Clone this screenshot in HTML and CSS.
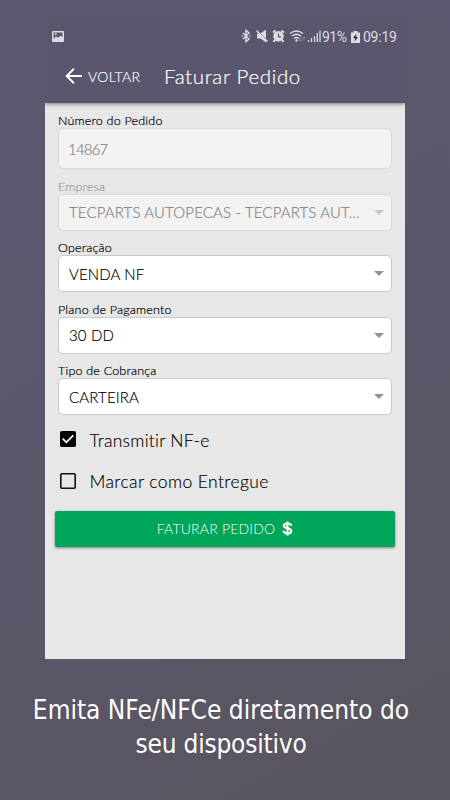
FILE: index.html
```html
<!DOCTYPE html>
<html lang="pt-BR">
<head>
<meta charset="utf-8">
<title>Faturar Pedido</title>
<link rel="stylesheet" href="styles.css">
</head>
<body>
<main class="phone">
  <div class="status">
    <svg class="photo" width="12" height="11" viewBox="0 0 12 11"><rect width="12" height="11" rx="1" fill="#dddce2"/><path d="M1.500 1.500h9v5L8.700 4.500 6.200 6.800 4 5.500 1.500 7.800z" fill="#5a566e"/><circle cx="3.700" cy="3.300" r="1" fill="#dddce2"/></svg>
    <div class="signals">
      <svg class="radios" width="83" height="14" viewBox="0 0 83 14">
        <g fill="none" stroke="#dddce2" stroke-width="1.400"><path d="M2 4l6 6-3 2.700V1.300L8 4 2 10"/><path d="M.6 7h1M8.500 7h1"/></g>
        <path d="M16 4.500h3.500l5.500-4v13l-5.500-4H16z" fill="#dddce2"/><path d="M16.500 1.500l11 11" stroke="#5a566e" stroke-width="1"/><path d="M15.500 1.500l11 11" stroke="#dddce2" stroke-width="1.400"/>
        <circle cx="37.500" cy="7.300" r="5.200" fill="#dddce2"/><path d="M32 3.500L34.500 1.500M43 3.500L40.500 1.500M34 11l-1.500 1.800M41 11l1.500 1.800" stroke="#dddce2" stroke-width="2"/><path d="M37.500 4.500v3.300H40" fill="none" stroke="#5a566e" stroke-width="1.200"/>
        <g fill="none" stroke="#dddce2" stroke-width="1.300"><path d="M49 4.500q6.500-5 13 0M51 7q4.500-3.500 9 0M53 9.500q2.500-2 5 0"/></g><circle cx="55.500" cy="11.500" r="1.200" fill="#dddce2"/><path d="M59.500 8v4M58 10.500l1.500 1.700 1.500-1.700M63 12V8M61.700 9.300L63 7.800l1.300 1.500" fill="none" stroke="#96939f" stroke-width=".8"/>
        <path d="M67.500 11v2M70.500 9v4M73.500 7v6M76.300 4v9M79 1.500v11.500" stroke="#dddce2" stroke-width="1.300"/>
      </svg>
      <span class="pct">91%</span>
      <svg class="battery" width="9" height="12" viewBox="0 0 9 12"><path d="M0 1.500h2.500V0h4v1.500H9V12H0z" fill="#dddce2"/><path d="M5.500 2.500L2 7h2L3.500 10.500 7 6H5z" fill="#302d3b"/></svg>
      <span class="clock">09:19</span>
    </div>
  </div>
  <header class="bar">
    <svg width="18" height="18" viewBox="0 0 18 18"><path d="M17 9H2M9 1.700L1.700 9 9 16.300" fill="none" stroke="#fff" stroke-width="2"/></svg>
    <span class="back">VOLTAR</span>
    <h1 class="title">Faturar Pedido</h1>
  </header>
  <section class="content">
    <div class="field order disabled">
      <div class="label">Número do Pedido</div>
      <div class="box"><span class="v-order">14867</span></div>
    </div>
    <div class="field company disabled">
      <div class="label">Empresa</div>
      <div class="box"><span>TECPARTS AUTOPECAS - TECPARTS AUT...</span><i class="arrow"></i></div>
    </div>
    <div class="field">
      <div class="label">Operação</div>
      <div class="box"><span>VENDA NF</span><i class="arrow"></i></div>
    </div>
    <div class="field">
      <div class="label">Plano de Pagamento</div>
      <div class="box"><span>30 DD</span><i class="arrow"></i></div>
    </div>
    <div class="field">
      <div class="label">Tipo de Cobrança</div>
      <div class="box"><span>CARTEIRA</span><i class="arrow"></i></div>
    </div>
    <div class="checks">
      <div class="check">
        <svg width="16" height="16" viewBox="0 0 16 16"><rect width="16" height="16" rx="1.700" fill="#050505"/><path d="M2.700 7.700l3.600 3.700 7-7" fill="none" stroke="#fff" stroke-width="1.700"/></svg>
        <span class="c-send">Transmitir NF-e</span>
      </div>
      <div class="check">
        <svg width="16" height="16" viewBox="0 0 16 16"><rect x=".8" y=".8" width="14.400" height="14.400" rx="1" fill="none" stroke="#111" stroke-width="1.600"/></svg>
        <span>Marcar como Entregue</span>
      </div>
    </div>
    <div class="submit">
      <span>FATURAR PEDIDO</span>
      <svg width="11" height="15" viewBox="0 0 11 15"><path d="M9.500 4.700C9 2.900 7.500 2.500 5.500 2.500 3.300 2.500 1.800 3.300 1.800 4.800c0 3.500 7.500 1.500 7.500 5.100 0 1.700-1.500 2.600-3.800 2.600S1.700 11.600 1.400 9.700M5.500.5v14" fill="none" stroke="#fff" stroke-width="2.100"/></svg>
    </div>
  </section>
</main>
<footer class="caption"><div>Emita NFe/NFCe diretamento do</div><div class="cap-two">seu dispositivo</div></footer>
</body>
</html>
```
FILE: styles.css
```css
* { box-sizing: border-box; }
body {
  margin: 0;
  width: 450px;
  height: 800px;
  padding-top: 15px;
  overflow: hidden;
  background: linear-gradient(150deg, #5b5771 0%, #5a5669 55%, #59555e 100%);
  font-family: Lato, "Liberation Sans", sans-serif;
  font-weight: 300;
  font-variant-ligatures: none;
  white-space: nowrap;
}
svg { display: block; flex: none; }
.phone { width: 360px; height: 644px; margin: 0 auto; background: #e7e7e7; }
.status {
  display: flex;
  justify-content: space-between;
  height: 34px;
  padding: 14px 8px 0 7px;
  background: #5a566e;
}
.photo { margin-top: 2px; }
.signals { display: flex; color: #dddce2; font: 14px/16px Roboto, sans-serif; }
.radios { margin-right: 1px; }
.pct { width: 27px; margin-left: -3px; letter-spacing: -0.5px; }
.battery { margin: 2px 3px 0 2px; }
.clock { width: 34px; letter-spacing: -0.25px; }
.bar {
  position: relative;
  display: flex;
  align-items: center;
  height: 54px;
  padding-left: 20px;
  background: #5a566e;
  color: #fff;
  box-shadow: 0 1px 4px rgba(0, 0, 0, .5);
  clip-path: inset(0 0 -6px 0);
}
.back { width: 53px; margin-left: 5px; font-size: 14px; letter-spacing: 0.3px; -webkit-text-stroke: 0.15px; }
.title { margin: 0 0 0 23px; font-size: 20.5px; font-weight: 300; line-height: 26px; letter-spacing: 0.64px; -webkit-text-stroke: 0.2px; }
.content { padding: 10px 13px 0; }
.field { height: 61.5px; color: #000; }
.order { height: 65.5px; }
.label { height: 15px; font-size: 12.5px; line-height: 16px; letter-spacing: 0.2px; -webkit-text-stroke: 0.2px; }
.box {
  display: flex;
  align-items: center;
  justify-content: space-between;
  width: 334px;
  height: 37px;
  padding: 0 7px 0 10px;
  border: 1px solid #c9c9c9;
  border-radius: 5px;
  background: #fff;
  font-size: 15px;
  letter-spacing: 0.15px;
  -webkit-text-stroke: 0.15px;
}
.disabled .box { border-color: #dadada; background: #f2f2f2; color: #808080; }
.order .box { height: 41px; padding-left: 9px; }
.v-order { letter-spacing: -0.8px; }
.company .label { color: #999; }
.arrow { border: 5px solid transparent; border-top-color: #929292; border-bottom: 0; }
.disabled .arrow { border-top-color: #c7c7c7; }
.checks { margin-top: -5px; }
.check {
  display: flex;
  align-items: center;
  gap: 14px;
  height: 41.5px;
  padding-left: 2px;
  color: #000;
  font-size: 17.5px;
  letter-spacing: 0.4px;
  -webkit-text-stroke: 0.15px;
}
.check svg { margin: 0 0 2px -0.5px; }
.c-send { letter-spacing: 0.25px; }
.submit {
  display: flex;
  align-items: center;
  justify-content: center;
  gap: 7px;
  height: 36px;
  margin: 8px -3px 0;
  border-radius: 2px;
  background: #00a65a;
  box-shadow: 0 1px 3px rgba(0, 0, 0, .45);
  color: #fff;
  font-size: 14px;
  letter-spacing: 0.2px;
}
.caption {
  width: 450px;
  margin-top: 34px;
  padding-right: 8px;
  color: #fff;
  font: 26px/34px "DejaVu Sans Condensed", "DejaVu Sans", sans-serif;
  font-stretch: condensed;
  text-align: center;
}
.cap-two { letter-spacing: -0.2px; }
```
